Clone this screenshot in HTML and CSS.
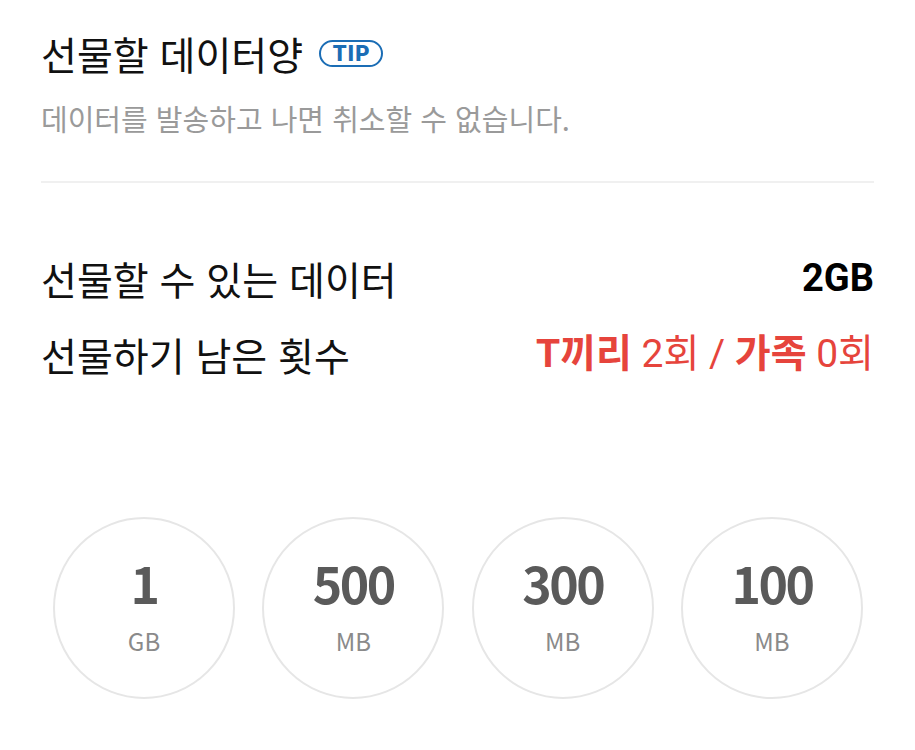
FILE: index.html
```html
<!DOCTYPE html>
<html lang="ko">
<head>
<meta charset="utf-8">
<link rel="stylesheet" href="styles.css">
</head>
<body>
<div class="page">
  <div class="title-row">
    <h1 class="title">선물할 데이터양</h1>
    <span class="tip">TIP</span>
  </div>
  <p class="sub">데이터를 발송하고 나면 취소할 수 없습니다.</p>
  <div class="divider"></div>
  <div class="rows">
    <div class="row">
      <span class="label">선물할 수 있는 데이터</span>
      <span class="value">2GB</span>
    </div>
    <div class="row">
      <span class="label">선물하기 남은 횟수</span>
      <span class="value red"><b>T끼리</b> 2회 / <b>가족</b> 0회</span>
    </div>
  </div>
  <div class="circles">
    <div class="circle"><span class="num">1</span><span class="unit">GB</span></div>
    <div class="circle"><span class="num">500</span><span class="unit">MB</span></div>
    <div class="circle"><span class="num">300</span><span class="unit">MB</span></div>
    <div class="circle"><span class="num">100</span><span class="unit">MB</span></div>
  </div>
</div>
</body>
</html>
```
FILE: styles.css
```css
html, body {
  margin: 0;
  padding: 0;
  background: #ffffff;
}
body {
  font-family: Roboto, "Noto Sans CJK KR", sans-serif;
  color: #111;
}
.page {
  padding: 31px 41px 0 41px;
}
.title-row {
  display: flex;
  align-items: center;
  gap: 16px;
  height: 44px;
}
.title {
  margin: 0;
  font-family: "Noto Sans CJK KR", sans-serif;
  font-weight: 400;
  font-size: 39px;
  line-height: 44px;
  color: #111;
}
.tip {
  box-sizing: border-box;
  width: 64px;
  height: 27px;
  border: 2.5px solid #1b6db5;
  border-radius: 14px;
  display: flex;
  align-items: center;
  justify-content: center;
  font-family: Roboto, sans-serif;
  font-weight: 900;
  font-size: 22px;
  letter-spacing: 1px;
  padding-left: 1px;
  color: #1b6db5;
  margin-top: 1px;
}
.sub {
  margin: 25px 0 0 0;
  font-family: "Noto Sans CJK KR", sans-serif;
  font-size: 29px;
  line-height: 36px;
  color: #9a9a9a;
}
.divider {
  margin-top: 45px;
  height: 2px;
  background: #f0f0f0;
}
.rows {
  margin-top: 73px;
  display: flex;
  flex-direction: column;
  gap: 32px;
}
.row {
  display: flex;
  justify-content: space-between;
  align-items: center;
  height: 44px;
}
.label {
  font-family: "Noto Sans CJK KR", sans-serif;
  font-size: 39px;
  line-height: 44px;
  color: #111;
}
.value {
  font-family: Roboto, "Noto Sans CJK KR", sans-serif;
  font-weight: 700;
  font-size: 38px;
  line-height: 44px;
  color: #000;
}
.value.red {
  color: #e6443c;
  font-weight: 400;
  font-size: 39px;
}
.value.red b {
  font-weight: 700;
}
.circles {
  margin-top: 141px;
  display: flex;
  justify-content: space-between;
  padding: 0 11px 0 12px;
}
.circle {
  box-sizing: border-box;
  width: 182px;
  height: 182px;
  padding-top: 35px;
  border: 2px solid #e6e6e6;
  border-radius: 50%;
  display: flex;
  flex-direction: column;
  align-items: center;
  justify-content: flex-start;
  font-family: "Noto Sans CJK KR", sans-serif;
}
.num {
  font-size: 50px;
  font-weight: 700;
  line-height: 56px;
  height: 56px;
  color: #5a5a5a;
  letter-spacing: -2.5px;
}
.unit {
  font-size: 24px;
  line-height: 30px;
  color: #8a8a8a;
  margin-top: 16px;
}
```
